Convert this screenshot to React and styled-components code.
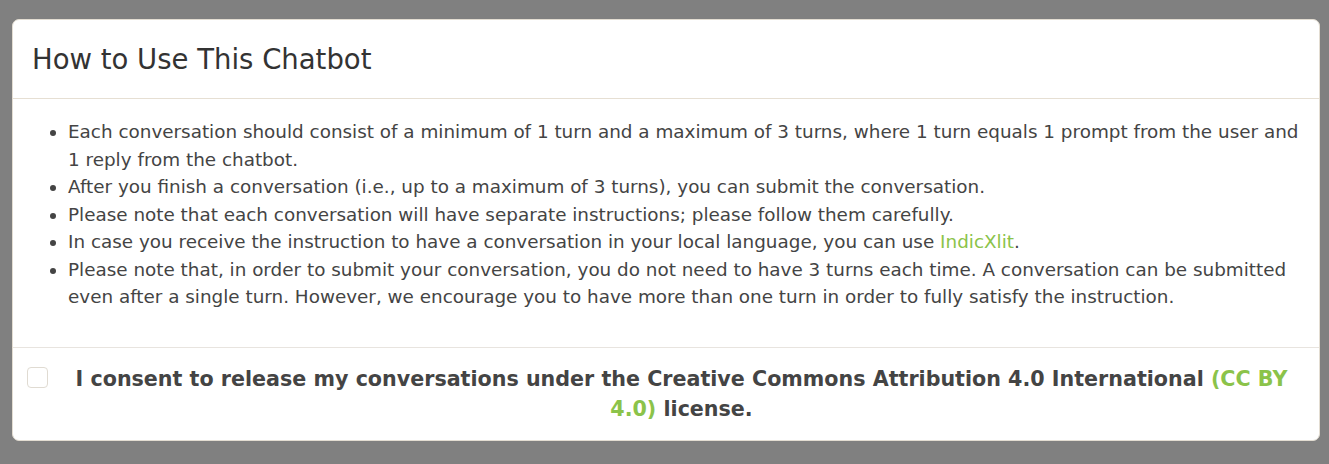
import React from "react";
import styled, { createGlobalStyle } from "styled-components";

const Global = createGlobalStyle`
  html, body { margin: 0; padding: 0; background: #808080; }
  body { font-family: "DejaVu Sans", sans-serif; color: #444; }
  * { box-sizing: border-box; }
`;

const Backdrop = styled.div`
  min-height: 464px;
  padding: 19px 9px 0 12px;
  background: #808080;
`;

const Modal = styled.div`
  background: #fff;
  border: 1px solid #e3ddd2;
  border-radius: 7px;
  overflow: hidden;
`;

const Header = styled.div`
  padding: 21px 20px 20px 19px;
  border-bottom: 1px solid #e6dfd3;
`;

const Title = styled.h4`
  margin: 0;
  font-size: 27.5px;
  font-weight: 400;
  line-height: 37px;
  color: #333;
`;

const Body = styled.div`
  padding: 19px 12px 36px 20px;
`;

const List = styled.ul`
  margin: 0;
  padding-left: 35px;
  font-size: 18.38px;
  line-height: 27.5px;
  color: #444;
`;

const Link = styled.a`
  color: #8bc34a;
  text-decoration: none;
`;

const Footer = styled.div`
  border-top: 1px solid #e8e4df;
  display: flex;
  align-items: flex-start;
  padding: 16px 12px 16px 14px;
  gap: 8px;
`;

const Check = styled.span`
  flex: none;
  width: 21px;
  height: 21px;
  border: 1px solid #e0dbd2;
  border-radius: 4px;
  background: #fff;
  margin-top: 3px;
`;

const Consent = styled.p`
  margin: 0;
  flex: 1;
  text-align: center;
  font-size: 20.65px;
  font-weight: 700;
  line-height: 30px;
  color: #444;
`;

const items = [
  "Each conversation should consist of a minimum of 1 turn and a maximum of 3 turns, where 1 turn equals 1 prompt from the user and 1 reply from the chatbot.",
  "After you finish a conversation (i.e., up to a maximum of 3 turns), you can submit the conversation.",
  "Please note that each conversation will have separate instructions; please follow them carefully.",
];

export default function App() {
  return (
    <>
      <Global />
      <Backdrop>
        <Modal>
          <Header>
            <Title>How to Use This Chatbot</Title>
          </Header>
          <Body>
            <List>
              {items.map((t) => (
                <li key={t}>{t}</li>
              ))}
              <li>
                In case you receive the instruction to have a conversation in your local language, you can use{" "}
                <Link href="#">IndicXlit</Link>.
              </li>
              <li>
                Please note that, in order to submit your conversation, you do not need to have 3 turns each time. A
                conversation can be submitted even after a single turn. However, we encourage you to have more than
                one turn in order to fully satisfy the instruction.
              </li>
            </List>
          </Body>
          <Footer>
            <Check />
            <Consent>
              I consent to release my conversations under the Creative Commons Attribution 4.0 International{" "}
              <Link href="#">(CC BY 4.0)</Link> license.
            </Consent>
          </Footer>
        </Modal>
      </Backdrop>
    </>
  );
}
